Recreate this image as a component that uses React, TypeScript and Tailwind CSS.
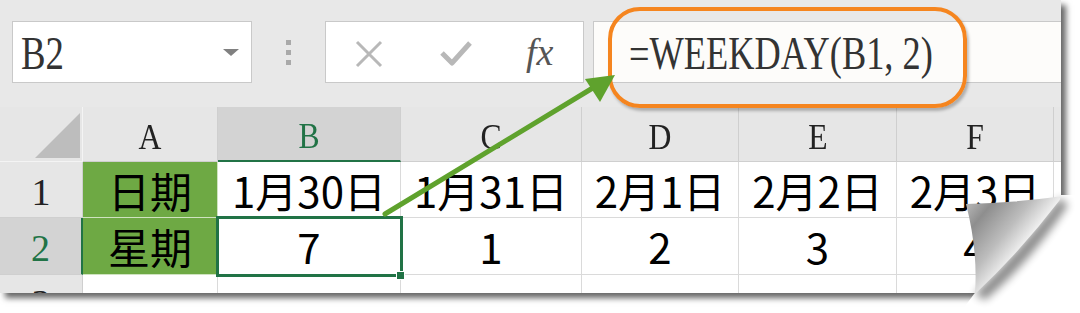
import React from "react";

const row1 = ["日期", "1月30日", "1月31日", "2月1日", "2月2日", "2月3日"];
const row2 = ["星期", "7", "1", "2", "3", "4"];
const letters = ["A", "B", "C", "D", "E", "F"];

function SerifText({ children, className = "" }: { children: React.ReactNode; className?: string }) {
  return (
    <span className={`inline-block font-['Liberation_Serif','Times_New_Roman',serif] leading-none ${className}`}>
      {children}
    </span>
  );
}

function Toolbar() {
  return (
    <div className="h-[107px] flex items-start pt-[21px] pl-[12px] bg-[#e8e8e8]">
      {/* name box */}
      <div className="w-[240px] h-[62px] bg-white border border-[#c9c9c9] flex items-center justify-between pl-[8px] pr-[12px]">
        <SerifText className="text-[46px] text-[#333] scale-x-[0.8] origin-left translate-y-[2px]">B2</SerifText>
        <div className="w-0 h-0 border-l-[8px] border-r-[8px] border-t-[7px] border-l-transparent border-r-transparent border-t-[#808080]" />
      </div>
      <div className="w-[73px] h-[62px] flex flex-col items-center justify-center gap-[5px]">
        <div className="w-[5px] h-[5px] bg-[#a9a9a9]" />
        <div className="w-[5px] h-[5px] bg-[#a9a9a9]" />
        <div className="w-[5px] h-[5px] bg-[#a9a9a9]" />
      </div>
      {/* cancel / enter / fx */}
      <div className="w-[259px] h-[62px] bg-white border border-[#c9c9c9] relative">
        <svg width="259" height="62" className="absolute inset-0">
          <path d="M31 20 L55 44 M55 20 L31 44" stroke="#b8b8b8" strokeWidth="3" fill="none" />
          <path d="M116 31 L126 41 L144 21" stroke="#b8b8b8" strokeWidth="5" fill="none" strokeLinejoin="round" />
        </svg>
        <SerifText className="absolute left-[200px] top-[11px] italic text-[38px] text-[#555]">fx</SerifText>
      </div>
      {/* formula bar */}
      <div className="flex-1 h-[62px] ml-[9px] bg-[#fdfcfa] border-y border-l border-[#c9c9c9] flex items-center pl-[35px]">
        <SerifText className="text-[46px] text-[#333] scale-x-[0.79] origin-left whitespace-nowrap translate-y-[2px]">=WEEKDAY(B1, 2)</SerifText>
      </div>
    </div>
  );
}

function Sheet() {
  return (
    <div className="grid grid-cols-[83px_135px_183px_181px_157px_158px_157px_7px] grid-rows-[55px_56px_57px_18px] bg-white">
      {/* header row */}
      <div className="relative bg-[#e6e6e6] border-r border-b border-[#f4f4f4]">
        <div className="absolute left-[35px] top-[6px] w-0 h-0 border-b-[45px] border-l-[45px] border-b-[#bdbdbd] border-l-transparent" />
      </div>
      {letters.map((l) => (
        <div
          key={l}
          className={`flex items-end justify-center pb-[6px] border-r border-[#cfcfcf] ${
            l === "B" ? "bg-[#d3d3d3] border-b-[2px] border-b-[#217346]" : "bg-[#e6e6e6] border-b border-b-[#cfcfcf]"
          }`}
        >
          <SerifText className={`text-[36px] scale-x-[0.88] ${l === "B" ? "text-[#217346]" : "text-[#222]"}`}>{l}</SerifText>
        </div>
      ))}
      <div className="bg-[#e6e6e6] border-b border-[#cfcfcf]" />

      {/* row 1 */}
      <div className="bg-[#e6e6e6] border-r border-b border-[#cfcfcf] flex items-center justify-center pt-[4px]">
        <SerifText className="text-[38px] text-[#222]">1</SerifText>
      </div>
      {row1.map((t, i) => (
        <div
          key={i}
          className={`flex items-center justify-center font-['Noto_Sans_CJK_SC',sans-serif] text-[42px] leading-none text-black ${
            i === 0 ? "bg-[#6ea944] border-r border-b border-[#cfe3c0]" : "border-r border-b border-[#dadada]"
          }`}
        >
          {t}
        </div>
      ))}
      <div className="border-b border-[#dadada]" />

      {/* row 2 */}
      <div className="bg-[#d3d3d3] border-r-[2px] border-r-[#217346] border-b border-b-[#cfcfcf] flex items-center justify-center pt-[4px]">
        <SerifText className="text-[38px] text-[#217346]">2</SerifText>
      </div>
      {row2.map((t, i) => (
        <div
          key={i}
          className={`flex items-center justify-center font-['Noto_Sans_CJK_SC',sans-serif] text-[42px] leading-none text-black ${
            i === 0 ? "bg-[#6ea944] border-r border-b border-[#cfe3c0]" : "border-r border-b border-[#dadada]"
          }`}
        >
          {t}
        </div>
      ))}
      <div className="border-b border-[#dadada]" />

      {/* row 3 (cut off by the panel edge) */}
      <div className="bg-[#e6e6e6] border-r border-[#cfcfcf] flex justify-center overflow-hidden">
        <SerifText className="text-[38px] text-[#222] mt-[9px]">3</SerifText>
      </div>
      {letters.map((l) => (
        <div key={l} className="border-r border-[#dadada]" />
      ))}
      <div />
    </div>
  );
}

export default function App() {
  return (
    <div className="relative w-[1080px] h-[313px] bg-white overflow-hidden">
      <div className="relative w-[1061px] h-[293px] overflow-hidden bg-[#e8e8e8] shadow-[5px_5px_6px_rgba(0,0,0,0.6)]">
        <Toolbar />
        <Sheet />
      </div>

      {/* selected cell B2 */}
      <div className="absolute left-[216px] top-[216px] w-[187px] h-[61px] border-[3px] border-[#217346]" />
      <div className="absolute left-[396px] top-[271px] w-[9px] h-[9px] bg-[#217346] border border-white" />

      {/* orange highlight */}
      <div className="absolute left-[608px] top-[7px] w-[359px] h-[101px] border-[4px] border-[#f5851f] rounded-[32px] shadow-[2px_3px_3px_rgba(0,0,0,0.25)]" />

      {/* green arrow */}
      <svg width="1080" height="313" className="absolute inset-0 pointer-events-none">
        <line x1="385" y1="214" x2="596" y2="86" stroke="#5fa22d" strokeWidth="5" strokeLinecap="round" />
        <polygon points="615,75 585,79 600,102" fill="#5fa22d" />
      </svg>

      {/* page curl */}
      <svg width="1080" height="313" className="absolute inset-0 pointer-events-none">
        <defs>
          <linearGradient id="flap" gradientUnits="userSpaceOnUse" x1="1020" y1="248" x2="966" y2="204">
            <stop offset="0" stopColor="#eeeeee" />
            <stop offset="0.3" stopColor="#bdbdbd" />
            <stop offset="0.72" stopColor="#8e8e8e" />
            <stop offset="1" stopColor="#b8b8b8" />
          </linearGradient>
          <filter id="blur" x="-20%" y="-20%" width="140%" height="140%">
            <feGaussianBlur stdDeviation="4" />
          </filter>
        </defs>
        <polygon points="1060,195 1080,195 1080,313 960,313 974,294" fill="#fff" />
        <path
          d="M975 294 Q1020 250 1060 198 L1068 205 Q1030 262 985 300 Z"
          fill="#000"
          opacity="0.45"
          filter="url(#blur)"
        />
        <path
          d="M966 204 Q1010 203 1056 197 Q1062 197 1059 201 Q1020 252 975 294 Q978 250 966 204 Z"
          fill="url(#flap)"
        />
      </svg>
    </div>
  );
}
